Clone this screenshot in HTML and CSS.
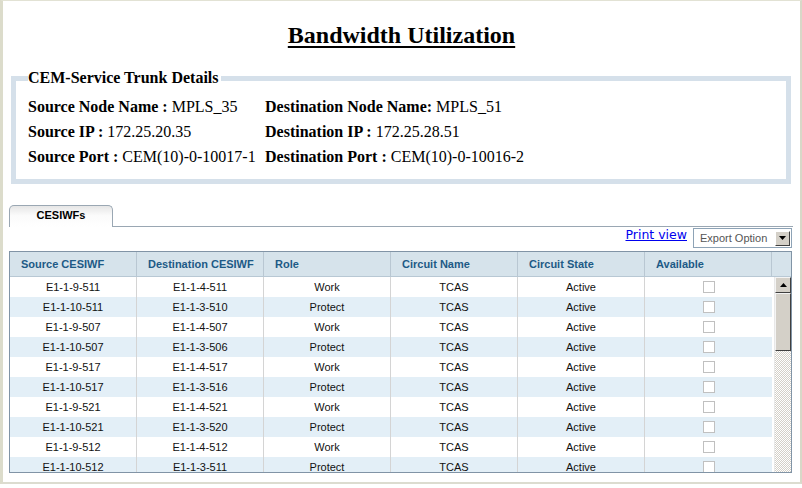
FILE: index.html
```html
<!DOCTYPE html>
<html>
<head>
<meta charset="utf-8">
<link rel="stylesheet" href="styles.css">
</head>
<body>
<div class="frame">
  <h1 class="title"><span>Bandwidth Utilization</span></h1>

  <fieldset class="details">
    <legend>CEM-Service Trunk Details</legend>
    <div class="grid">
      <div><b>Source Node Name : </b>MPLS_35</div>
      <div><b>Destination Node Name: </b>MPLS_51</div>
      <div><b>Source IP : </b>172.25.20.35</div>
      <div><b>Destination IP : </b>172.25.28.51</div>
      <div><b>Source Port : </b>CEM(10)-0-10017-1</div>
      <div><b>Destination Port : </b>CEM(10)-0-10016-2</div>
    </div>
  </fieldset>

  <div class="tabs">
    <div class="tab">CESIWFs</div>
    <div class="tabline"></div>
  </div>

  <div class="panel">
    <div class="toolbar">
      <a href="#" class="print">Print view</a>
      <div class="select">
        <span>Export Option</span>
        <span class="drop"><svg width="7" height="4" viewBox="0 0 7 4"><path d="M0 0H7L3.5 4Z" fill="#000"/></svg></span>
      </div>
    </div>
    <div class="tablebox">
      <div class="head">
        <div>Source CESIWF</div>
        <div>Destination CESIWF</div>
        <div>Role</div>
        <div>Circuit Name</div>
        <div>Circuit State</div>
        <div>Available</div>
        <div></div>
      </div>
      <div class="bodywrap">
        <div class="rows">
          <div class="row"><div>E1-1-9-511</div><div>E1-1-4-511</div><div>Work</div><div>TCAS</div><div>Active</div><div><span class="cb"></span></div></div>
          <div class="row alt"><div>E1-1-10-511</div><div>E1-1-3-510</div><div>Protect</div><div>TCAS</div><div>Active</div><div><span class="cb"></span></div></div>
          <div class="row"><div>E1-1-9-507</div><div>E1-1-4-507</div><div>Work</div><div>TCAS</div><div>Active</div><div><span class="cb"></span></div></div>
          <div class="row alt"><div>E1-1-10-507</div><div>E1-1-3-506</div><div>Protect</div><div>TCAS</div><div>Active</div><div><span class="cb"></span></div></div>
          <div class="row"><div>E1-1-9-517</div><div>E1-1-4-517</div><div>Work</div><div>TCAS</div><div>Active</div><div><span class="cb"></span></div></div>
          <div class="row alt"><div>E1-1-10-517</div><div>E1-1-3-516</div><div>Protect</div><div>TCAS</div><div>Active</div><div><span class="cb"></span></div></div>
          <div class="row"><div>E1-1-9-521</div><div>E1-1-4-521</div><div>Work</div><div>TCAS</div><div>Active</div><div><span class="cb"></span></div></div>
          <div class="row alt"><div>E1-1-10-521</div><div>E1-1-3-520</div><div>Protect</div><div>TCAS</div><div>Active</div><div><span class="cb"></span></div></div>
          <div class="row"><div>E1-1-9-512</div><div>E1-1-4-512</div><div>Work</div><div>TCAS</div><div>Active</div><div><span class="cb"></span></div></div>
          <div class="row alt"><div>E1-1-10-512</div><div>E1-1-3-511</div><div>Protect</div><div>TCAS</div><div>Active</div><div><span class="cb"></span></div></div>
        </div>
        <div class="scrollbar">
          <div class="sbtn"><svg width="7" height="4" viewBox="0 0 7 4"><path d="M0 4H7L3.5 0Z" fill="#000"/></svg></div>
          <div class="thumb"></div>
          <div class="track"></div>
        </div>
      </div>
    </div>
  </div>
</div>
</body>
</html>
```

FILE: styles.css
```css
html, body {
  margin: 0;
  padding: 0;
  background: #fff;
}
.frame {
  width: 797px;
  height: 481px;
  border-left: 3px solid #dcdccb;
  border-top: 1px solid #e2e2d4;
  border-right: 2px solid #d8d8c8;
  border-bottom: 2px solid #dcdcd0;
  display: flex;
  flex-direction: column;
  overflow: hidden;
}
.title {
  margin: 0;
  padding-top: 20px;
  height: 38px;
  text-align: center;
  font-family: "Liberation Serif", "Times New Roman", serif;
  font-size: 24px;
  font-weight: bold;
  line-height: 28px;
  color: #000;
}
.title span {
  text-decoration: underline;
  text-decoration-thickness: 2px;
  text-underline-offset: 3px;
}
.details {
  margin: 11px 8px 0 8px;
  width: 780px;
  box-sizing: border-box;
  height: 114px;
  border: 5px solid #d5e0ea;
  padding: 0 0 0 12px;
  font-family: "Liberation Serif", "Times New Roman", serif;
  font-size: 16px;
  color: #000;
}
.details legend {
  font-weight: bold;
  padding: 0 2px 0 0;
  margin-left: 0;
  font-size: 16px;
  line-height: 16px;
}
.grid {
  display: grid;
  grid-template-columns: 237px auto;
  grid-auto-rows: 25px;
  margin-top: 8px;
  line-height: 25px;
}
.tabs {
  margin-top: 21px;
  margin-left: 6px;
  width: 784px;
  display: flex;
  height: 22px;
}
.tab {
  width: 104px;
  height: 22px;
  box-sizing: border-box;
  border: 1px solid #9aa7b3;
  border-bottom: none;
  border-radius: 5px 5px 0 0;
  background: linear-gradient(#e6e6e6, #fbfbfb 45%, #fff);
  font-family: "Liberation Sans", Tahoma, sans-serif;
  font-weight: bold;
  font-size: 11px;
  line-height: 19px;
  text-align: center;
  color: #000;
}
.tabline {
  flex: 1;
  border-bottom: 1px solid #9aa7b3;
}
.panel {
  margin-left: 6px;
  width: 783px;
  display: flex;
  flex-direction: column;
}
.toolbar {
  height: 24px;
  display: flex;
  justify-content: flex-end;
  align-items: flex-start;
  gap: 6px;
}
.print {
  font-family: "DejaVu Sans", Verdana, sans-serif;
  font-size: 12.5px;
  color: #0000ee;
  line-height: 15px;
  margin-top: 0;
  text-decoration: underline;
}
.select {
  margin-top: 1px;
  width: 99px;
  height: 20px;
  box-sizing: border-box;
  border: 1px solid #8ea3b6;
  display: flex;
  align-items: center;
  justify-content: space-between;
  padding: 0 1px 0 6px;
  font-family: "Liberation Sans", Tahoma, sans-serif;
  font-size: 11px;
  color: #555;
}
.drop {
  width: 15px;
  height: 15px;
  box-sizing: border-box;
  background: #d4d0c8;
  border: 1px solid;
  border-color: #fff #404040 #404040 #fff;
  display: flex;
  align-items: center;
  justify-content: center;
}
.tablebox {
  border: 1px solid #8194a6;
  height: 222px;
  box-sizing: border-box;
  display: flex;
  flex-direction: column;
  overflow: hidden;
  font-family: "Liberation Sans", Tahoma, sans-serif;
  font-size: 11px;
}
.head {
  display: grid;
  grid-template-columns: 127px 127px 127px 127px 127px 127px 1fr;
  height: 25px;
  background: #d6e3eb;
  border-bottom: 1px solid #b8c8d4;
  box-sizing: border-box;
  flex: none;
}
.head div {
  border-right: 1px solid #b9c7d2;
  font-weight: bold;
  color: #1d5a86;
  line-height: 24px;
  padding-left: 11px;
}
.head div:last-child {
  border-right: none;
}
.bodywrap {
  display: flex;
  flex: 1;
  overflow: hidden;
}
.rows {
  width: 762px;
  flex: none;
}
.row {
  display: grid;
  grid-template-columns: 127px 127px 127px 127px 127px 127px;
  height: 20px;
  background: #fff;
}
.row.alt {
  background: #e3eff7;
}
.row div {
  text-align: center;
  line-height: 20px;
  color: #111;
  border-right: 1px solid #d4d4d4;
}
.row div:last-child {
  border-right: none;
  display: flex;
  align-items: center;
  justify-content: center;
}
.cb {
  width: 10px;
  height: 10px;
  border: 1px solid #c0c0c0;
  background: #fff;
  display: block;
}
.scrollbar {
  width: 17px;
  margin-left: 2px;
  display: flex;
  flex-direction: column;
  border-left: 1px solid #e8e8e8;
}
.sbtn {
  height: 16px;
  box-sizing: border-box;
  background: #d4d0c8;
  border: 1px solid;
  border-color: #f4f4f4 #404040 #404040 #f4f4f4;
  display: flex;
  align-items: center;
  justify-content: center;
  flex: none;
}
.thumb {
  height: 58px;
  box-sizing: border-box;
  background: #d4d0c8;
  border: 1px solid;
  border-color: #f4f4f4 #404040 #404040 #f4f4f4;
  flex: none;
}
.track {
  flex: 1;
  background-color: #eeece8;
  background-image: repeating-conic-gradient(#d4d0c8 0 25%, #ffffff 0 50%);
  background-size: 2px 2px;
}
```
